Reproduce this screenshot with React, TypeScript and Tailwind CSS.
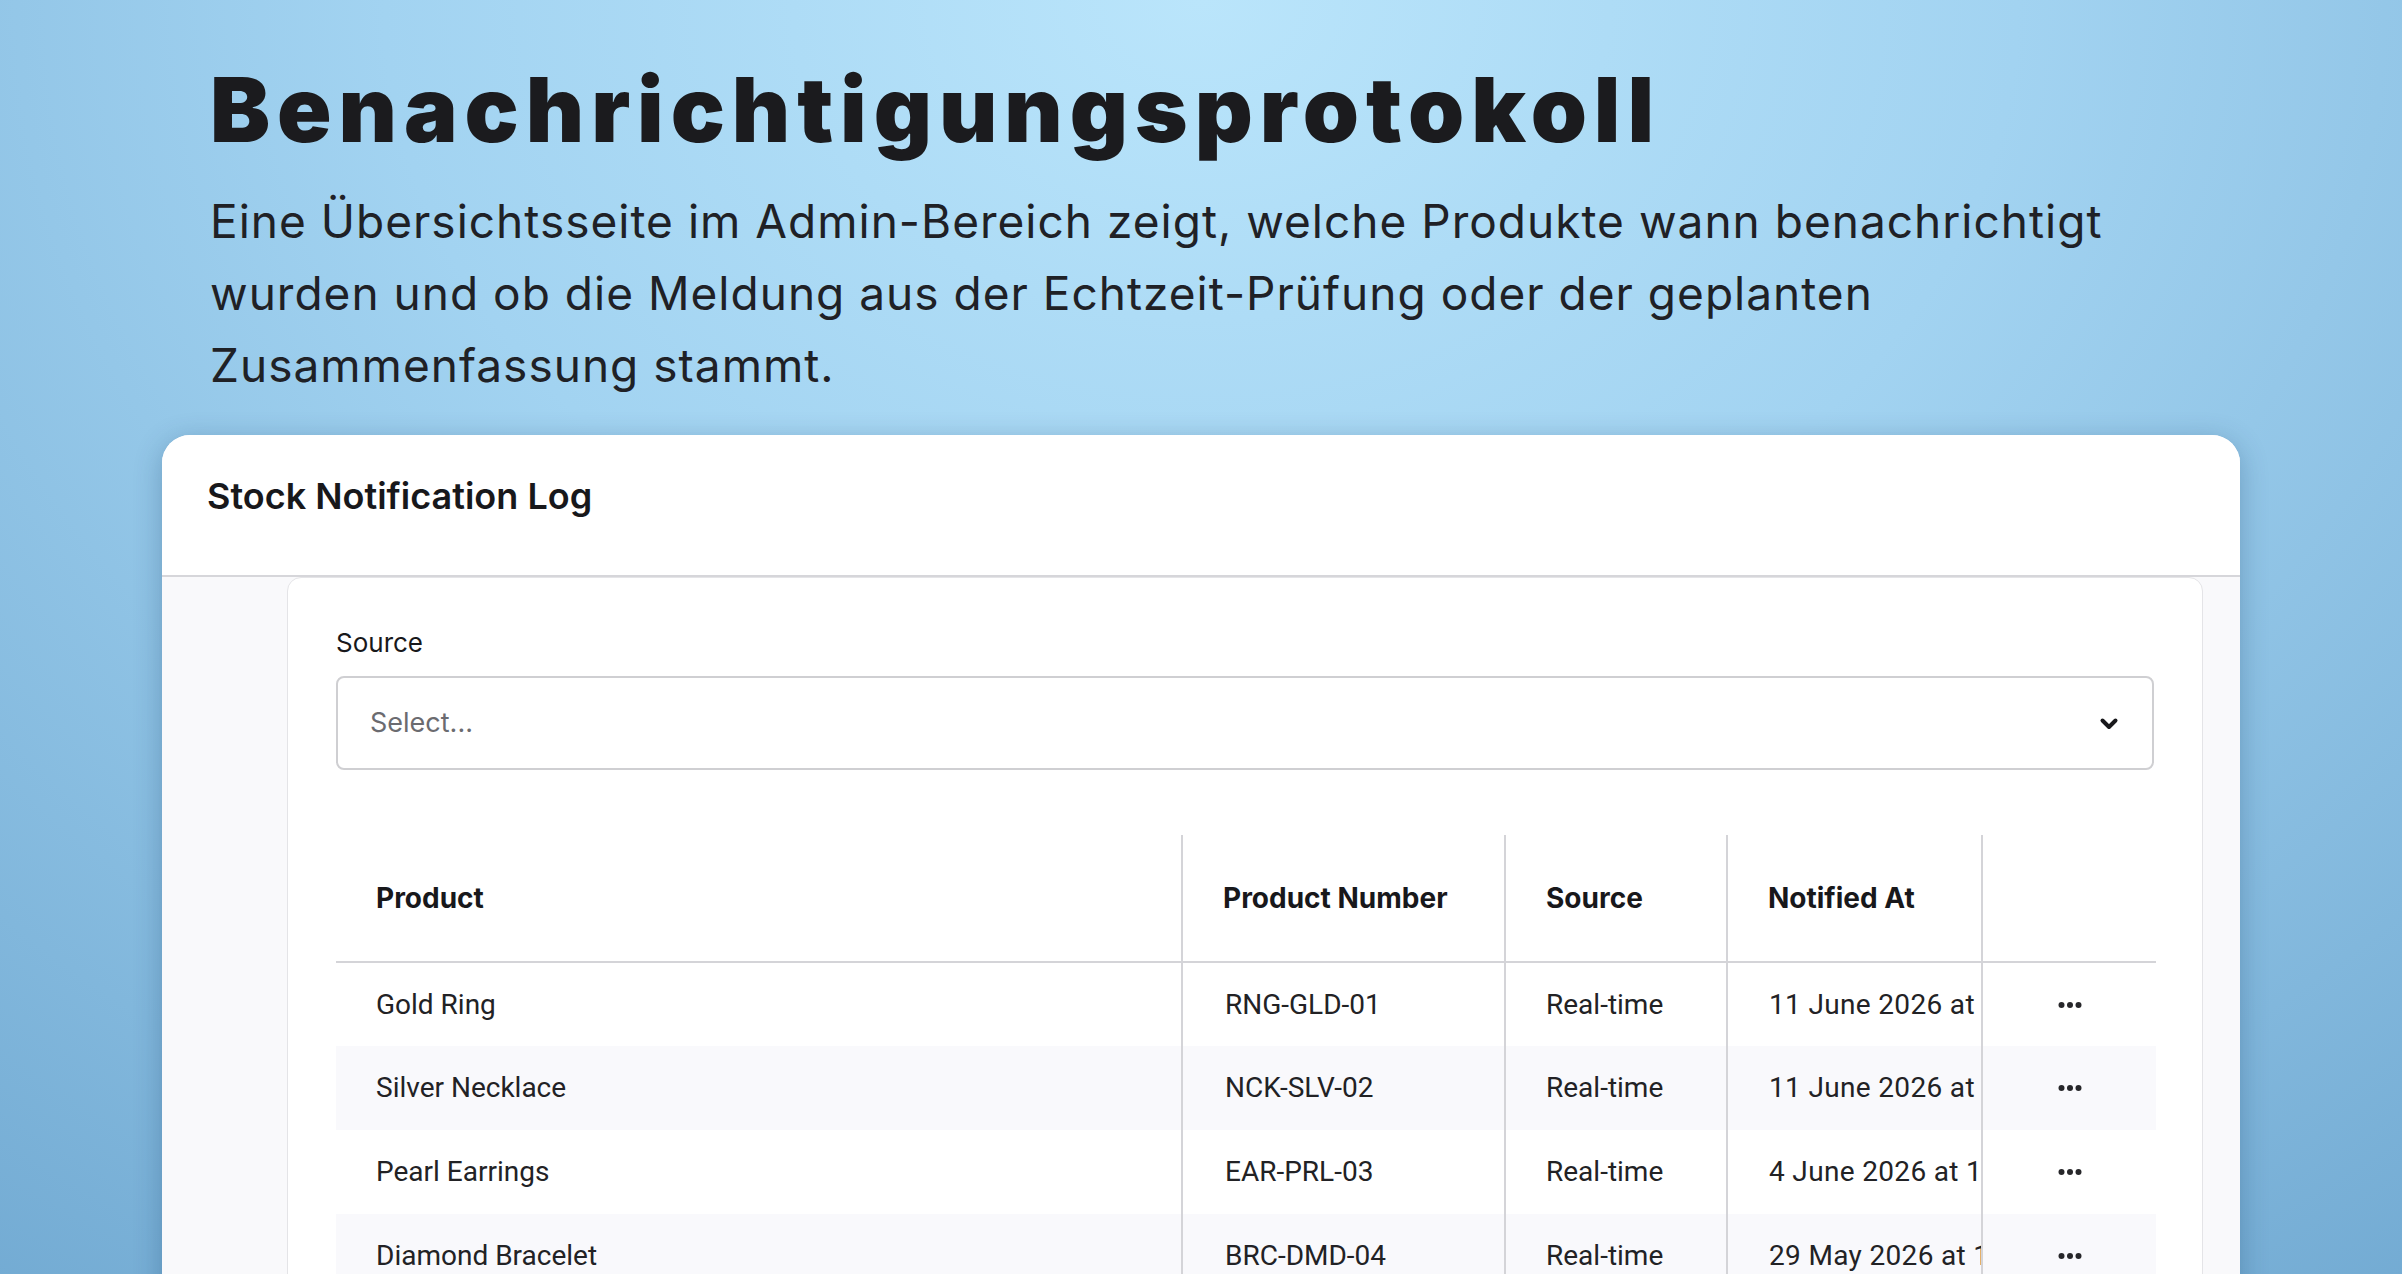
import React from "react"

type LogRow = {
  product: string
  number: string
  source: string
  notifiedAt: string
}

const rows: LogRow[] = [
  { product: "Gold Ring", number: "RNG-GLD-01", source: "Real-time", notifiedAt: "11 June 2026 at 14:32" },
  { product: "Silver Necklace", number: "NCK-SLV-02", source: "Real-time", notifiedAt: "11 June 2026 at 09:15" },
  { product: "Pearl Earrings", number: "EAR-PRL-03", source: "Real-time", notifiedAt: "4 June 2026 at 16:48" },
  { product: "Diamond Bracelet", number: "BRC-DMD-04", source: "Real-time", notifiedAt: "29 May 2026 at 11:05" },
  { product: "Sapphire Pendant", number: "PND-SPH-05", source: "Scheduled", notifiedAt: "28 May 2026 at 08:00" },
  { product: "Emerald Brooch", number: "BRO-EMR-06", source: "Scheduled", notifiedAt: "21 May 2026 at 08:00" },
]

function ChevronDown() {
  return (
    <svg width="20" height="13" viewBox="0 0 20 13" fill="none" aria-hidden="true">
      <path d="M3.5 3.5 L10 10 L16.5 3.5" stroke="#18181b" strokeWidth="4" strokeLinecap="round" strokeLinejoin="round" />
    </svg>
  )
}

function Dots() {
  return (
    <svg width="24" height="8" viewBox="0 0 24 8" aria-hidden="true">
      <circle cx="3.5" cy="4" r="3" fill="#27272a" />
      <circle cx="12" cy="4" r="3" fill="#27272a" />
      <circle cx="20.5" cy="4" r="3" fill="#27272a" />
    </svg>
  )
}

export default function App() {
  return (
    <div className="min-h-screen w-full bg-[radial-gradient(ellipse_85%_100%_at_50%_0%,#bae5fb_0%,#a2d3f1_40%,#73abd3_100%)] pb-[80px] font-['Inter',sans-serif]">
      {/* Intro */}
      <div className="px-[210px] pt-[65px]">
        <h1 className="text-[90px] font-black leading-[90px] tracking-[0.077em] text-[#1b1b1e]">
          Benachrichtigungsprotokoll
        </h1>
        <p className="mt-[30px] max-w-[1990px] text-[46px] leading-[72px] tracking-[0.022em] text-[#1f2126]">
          Eine Übersichtsseite im Admin-Bereich zeigt, welche Produkte wann benachrichtigt wurden und ob die Meldung
          aus der Echtzeit-Prüfung oder der geplanten Zusammenfassung stammt.
        </p>
      </div>

      {/* Card */}
      <div className="mx-[162px] mt-[34px] overflow-hidden rounded-[28px] bg-[#f9f9fb] shadow-[0_6px_28px_rgba(20,60,100,0.3)]">
        <div className="h-[142px] border-b-2 border-[#d6d6da] bg-white px-[45px] pt-[33px]">
          <h2 className="text-[36px] font-semibold leading-[56px] text-[#18181b]">Stock Notification Log</h2>
        </div>

        <div className="pl-[125px] pr-[37px]">
          <div className="rounded-t-[14px] border border-[#e4e4e7] bg-white px-[48px] pb-[48px] pt-[45px]">
            {/* Filter */}
            <label className="block text-[26px] leading-[39px] text-[#18181b]">Source</label>
            <div className="mt-[14px] flex h-[94px] items-center justify-between rounded-[8px] border-2 border-[#cfcfd2] bg-white pl-[32px] pr-[33px]">
              <span className="text-[27px] text-[#6b6b70]">Select...</span>
              <ChevronDown />
            </div>

            {/* Log table */}
            <table className="mt-[65px] w-full table-fixed border-collapse">
              <colgroup>
                <col className="w-[846px]" />
                <col className="w-[323px]" />
                <col className="w-[222px]" />
                <col className="w-[255px]" />
                <col className="w-[174px]" />
              </colgroup>
              <thead>
                <tr className="h-[127px] border-b-2 border-[#d4d4d8] text-left text-[28px] font-bold text-[#18181b]">
                  <th className="pl-[40px] font-bold">Product</th>
                  <th className="border-l-2 border-[#d4d4d8] pl-[40px] font-bold">Product Number</th>
                  <th className="border-l-2 border-[#d4d4d8] pl-[40px] font-bold">Source</th>
                  <th className="border-l-2 border-[#d4d4d8] pl-[40px] font-bold">Notified At</th>
                  <th className="border-l-2 border-[#d4d4d8]"></th>
                </tr>
              </thead>
              <tbody className="font-['Roboto',sans-serif] text-[28px] text-[#222225]">
                {rows.map((row, i) => (
                  <tr key={row.number} className={i % 2 === 1 ? "h-[84px] bg-[#f9f9fc]" : "h-[84px] bg-white"}>
                    <td className="pl-[40px]">{row.product}</td>
                    <td className="border-l-2 border-[#d4d4d8] pl-[42px]">{row.number}</td>
                    <td className="border-l-2 border-[#d4d4d8] pl-[40px]">{row.source}</td>
                    <td className="overflow-hidden whitespace-nowrap border-l-2 border-[#d4d4d8] pl-[41px] tracking-[0.012em]">
                      {row.notifiedAt}
                    </td>
                    <td className="border-l-2 border-[#d4d4d8]">
                      <div className="flex justify-center">
                        <Dots />
                      </div>
                    </td>
                  </tr>
                ))}
              </tbody>
            </table>
          </div>
        </div>
      </div>
    </div>
  )
}
